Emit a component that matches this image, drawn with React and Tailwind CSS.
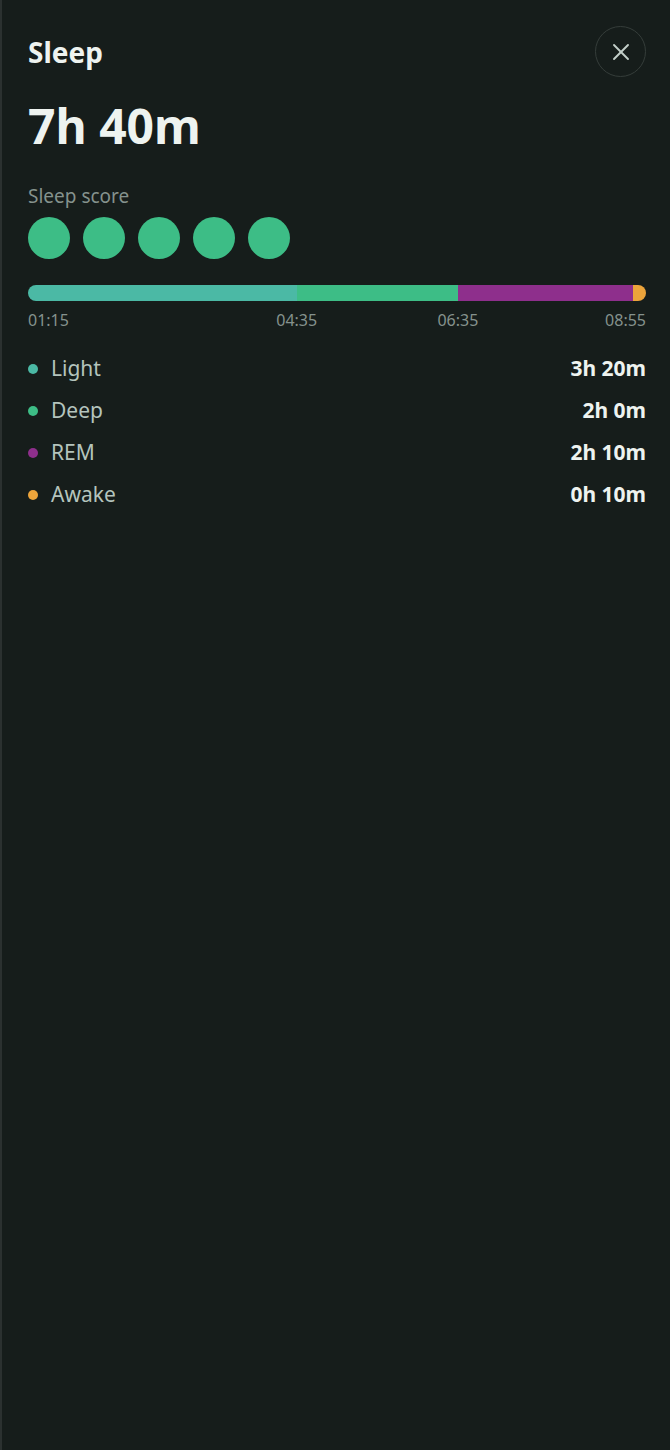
import { X } from 'lucide-react';

const stages = [
  { name: 'Light', minutes: 200, color: 'bg-[#4bb9a5]', value: '3h 20m' },
  { name: 'Deep', minutes: 120, color: 'bg-[#3dbd86]', value: '2h 0m' },
  { name: 'REM', minutes: 130, color: 'bg-[#8e2f8c]', value: '2h 10m' },
  { name: 'Awake', minutes: 10, color: 'bg-[#eca43b]', value: '0h 10m' },
];

const ticks = [
  { label: '01:15', at: 0 },
  { label: '04:35', at: 200 },
  { label: '06:35', at: 320 },
  { label: '08:55', at: 460 },
];

export default function App() {
  const total = stages.reduce((s, x) => s + x.minutes, 0);

  return (
    <div className="min-h-[1450px] w-full bg-[#161d1b] border-l-2 border-[#2b3130] font-['Noto_Sans',sans-serif] text-[#eef3f0]">
      <div className="pl-[26px] pr-[24px] pt-[26px]">
        <div className="flex items-center justify-between">
          <h2 className="text-[28px] font-bold leading-none">Sleep</h2>
          <button className="w-[51px] h-[51px] rounded-full border border-[#353d3a] flex items-center justify-center text-[#c3cfc9]">
            <X className="w-[28px] h-[28px]" strokeWidth={1.6} />
          </button>
        </div>

        <div className="mt-[25px] text-[48px] font-bold leading-none">7h 40m</div>

        <div className="mt-[37px] text-[19px] text-[#85928d] leading-none">Sleep score</div>
        <div className="mt-[11px] flex gap-[13px]">
          {[0, 1, 2, 3, 4].map((i) => (
            <div key={i} className="w-[42px] h-[42px] rounded-full bg-[#3dbd86]" />
          ))}
        </div>

        <div className="mt-[26px] flex h-[16px] rounded-full overflow-hidden">
          {stages.map((s) => (
            <div
              key={s.name}
              className={`${s.color} h-full`}
              style={{ width: `${(s.minutes / total) * 100}%` }}
            />
          ))}
        </div>
        <div className="relative h-[28px] text-[16px] text-[#85928d]">
          {ticks.map((t, i) => (
            <span
              key={t.label}
              className={`absolute top-[11px] leading-none ${
                i === 0 ? '' : i === ticks.length - 1 ? '-translate-x-full' : '-translate-x-1/2'
              }`}
              style={{ left: `${(t.at / total) * 100}%` }}
            >
              {t.label}
            </span>
          ))}
        </div>

        <div className="mt-[28px] flex flex-col gap-[18px]">
          {stages.map((s) => (
            <div key={s.name} className="flex items-center justify-between h-[24px]">
              <div className="flex items-center gap-[13px]">
                <span className={`w-[10px] h-[10px] rounded-full ${s.color}`} />
                <span className="text-[21px] text-[#b4c4bd]">{s.name}</span>
              </div>
              <span className="text-[21px] font-bold">{s.value}</span>
            </div>
          ))}
        </div>
      </div>
    </div>
  );
}
